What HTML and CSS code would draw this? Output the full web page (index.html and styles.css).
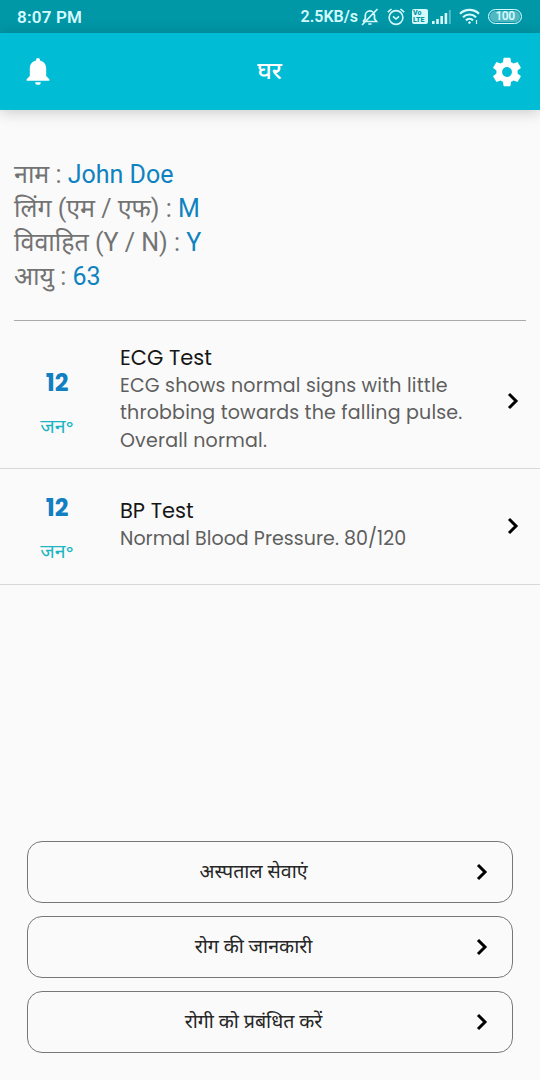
FILE: index.html
```html
<!DOCTYPE html>
<html lang="hi">
<head>
  <meta charset="UTF-8" />
  <meta name="viewport" content="width=device-width, initial-scale=1.0"/>
  <title>घर</title>
  <link rel="stylesheet" href="styles.css">
</head>
<body>
  <div class="status-bar">
    <span class="time">8:07 PM</span>
    <div class="status-icons">
      <span class="speed">2.5KB/s</span>
      <svg class="mute" width="18" height="18" viewBox="0 0 18 18" fill="none" stroke="currentColor" stroke-width="1.7">
        <path d="M2 13.500h13.500l-2-2.800V7.500a4.600 4.600 0 0 0-9.200 0v3.200L2 13.500M7.200 16h3.400M1 17 16.500 1"/>
      </svg>
      <svg class="alarm" width="18" height="18" viewBox="0 0 18 18" fill="none" stroke="currentColor" stroke-width="1.6">
        <circle cx="9" cy="9.500" r="6.900"/>
        <path d="M.8 4.200 4.500 1M17.200 4.200 13.500 1M6 8.300l3 2.700 3-2.700"/>
      </svg>
      <div class="volte"><span>Vo</span><span>LTE</span></div>
      <svg class="signal" width="20" height="16" viewBox="0 0 20 16" fill="currentColor">
        <path d="M0 12h2.600v3H0zM4.200 10h2.600v5H4.200zM8.400 7H11v8H8.400zM12.600 4h2.600v11h-2.600z"/>
        <path opacity=".4" d="M16.800 1h2v14h-2z"/>
      </svg>
      <svg class="wifi" width="21" height="17" viewBox="0 0 21 17" fill="none" stroke="currentColor" stroke-width="2.200">
        <path d="M1 5.800a13.600 13.600 0 0 1 19 0M4 9.200a9.200 9.200 0 0 1 13 0M7 12.400a5 5 0 0 1 7 0"/>
        <circle cx="10.500" cy="14.600" r=".9" fill="currentColor" stroke-width="1"/>
        <path stroke-width="1.200" d="M17.500 12v4"/>
      </svg>
      <div class="battery">100</div>
    </div>
  </div>

  <header class="app-bar">
    <svg class="bell" width="24" height="28" viewBox="0 0 24 28" fill="currentColor">
      <path d="M12 0a2 2 0 0 0-2 2v.5C6.300 3.400 3.800 6.400 3.800 10.300V18L.6 21.200V22.700h22.800V21.200L20.200 18v-7.700c0-3.900-2.500-6.900-6.200-7.800V2a2 2 0 0 0-2-2zM9.200 24.200a2.800 2.600 0 0 0 5.600 0z"/>
    </svg>
    <h1 class="title">घर</h1>
    <svg class="gear" width="34" height="34" viewBox="0 0 24 24" fill="currentColor">
      <path d="M19.430 12.980c.04-.32.07-.64.07-.98s-.03-.66-.07-.98l2.110-1.650c.19-.15.24-.42.12-.64l-2-3.460c-.12-.22-.39-.3-.61-.22l-2.490 1c-.52-.4-1.080-.73-1.690-.98l-.38-2.650C14.460 2.180 14.250 2 14 2h-4c-.25 0-.46.18-.49.42l-.38 2.650c-.61.25-1.170.59-1.690.98l-2.490-1c-.23-.09-.49 0-.61.22l-2 3.460c-.13.22-.07.49.12.64l2.110 1.650c-.04.32-.07.65-.07.98s.03.66.07.98l-2.110 1.650c-.19.15-.24.42-.12.64l2 3.460c.12.22.39.3.61.22l2.490-1c.52.4 1.080.73 1.690.98l.38 2.650c.03.24.24.42.49.42h4c.25 0 .46-.18.49-.42l.38-2.650c.61-.25 1.170-.59 1.690-.98l2.490 1c.23.09.49 0 .61-.22l2-3.460c.12-.22.07-.49-.12-.64l-2.110-1.650zM12 15.500a3.500 3.500 0 1 1 0-7 3.500 3.500 0 0 1 0 7z"/>
    </svg>
  </header>

  <main>
    <section class="profile">
      <p>नाम : <span class="value">John Doe</span></p>
      <p>लिंग (एम / एफ) : <span class="value">M</span></p>
      <p>विवाहित (Y / N) : <span class="value">Y</span></p>
      <p>आयु : <span class="value">63</span></p>
    </section>

    <ul class="tests">
      <li class="test ecg">
        <div class="date"><span class="day">12</span><span class="month">जन॰</span></div>
        <div class="info">
          <h2>ECG Test</h2>
          <p>ECG shows normal signs with little<br>throbbing towards the falling pulse.<br>Overall normal.</p>
        </div>
        <svg class="chevron" width="12" height="18" viewBox="0 0 12 18"><path d="M2 2l7 7-7 7"/></svg>
      </li>
      <li class="test bp">
        <div class="date"><span class="day">12</span><span class="month">जन॰</span></div>
        <div class="info">
          <h2>BP Test</h2>
          <p>Normal Blood Pressure. 80/120</p>
        </div>
        <svg class="chevron" width="12" height="18" viewBox="0 0 12 18"><path d="M2 2l7 7-7 7"/></svg>
      </li>
    </ul>
  </main>

  <nav class="actions">
    <button type="button">
      <span>अस्पताल सेवाएं</span>
      <svg class="chevron" width="12" height="18" viewBox="0 0 12 18"><path d="M2 2l7 7-7 7"/></svg>
    </button>
    <button type="button">
      <span>रोग की जानकारी</span>
      <svg class="chevron" width="12" height="18" viewBox="0 0 12 18"><path d="M2 2l7 7-7 7"/></svg>
    </button>
    <button type="button">
      <span>रोगी को प्रबंधित करें</span>
      <svg class="chevron" width="12" height="18" viewBox="0 0 12 18"><path d="M2 2l7 7-7 7"/></svg>
    </button>
  </nav>
</body>
</html>
```
FILE: styles.css
```css
* {
  box-sizing: border-box;
}

body {
  margin: 0;
  height: 1080px;
  display: flex;
  flex-direction: column;
  background-color: #fafafa;
  font-family: Roboto, "Noto Sans Devanagari", "Noto Sans", sans-serif;
}

h1, h2, p, ul {
  margin: 0;
  padding: 0;
  font-weight: normal;
}

svg {
  flex: none;
}

.status-bar {
  display: flex;
  align-items: center;
  justify-content: space-between;
  height: 33px;
  padding: 0 18px 0 17px;
  background-color: #0097a7;
  color: #d5fbff;
  font-weight: 600;
}

.time {
  font-size: 17px;
  letter-spacing: 0.2px;
}

.status-icons {
  display: flex;
  align-items: center;
}

.speed {
  margin-right: 3px;
  font-size: 16px;
}

.alarm {
  margin-left: 8px;
}

.volte {
  display: flex;
  flex-direction: column;
  width: 16px;
  height: 15px;
  margin: 0 4px 0 7px;
  padding: 1px;
  border-radius: 2px;
  background-color: #d5fbff;
  color: #0097a7;
  font-size: 7px;
  font-weight: 900;
  line-height: 6.5px;
}

.wifi {
  margin: 0 8px 0 7px;
}

.battery {
  width: 34px;
  height: 15px;
  border: 1.5px solid #d5fbff;
  border-radius: 8px;
  background-color: #4fb8c2;
  box-shadow: inset 0 0 0 1px #0097a7;
  font-size: 12px;
  letter-spacing: -0.5px;
  line-height: 13px;
  text-align: center;
}

.app-bar {
  display: flex;
  align-items: center;
  justify-content: space-between;
  height: 77px;
  padding: 0 16px 0 26px;
  background-color: #00bcd4;
  box-shadow: 0 2px 14px rgba(0, 0, 0, 0.2);
  color: #fff;
}

.title {
  margin-right: 1px;
  padding-top: 3px;
  font-size: 24px;
  font-weight: 500;
}

.profile {
  height: 211px;
  margin: 0 14px;
  padding-top: 48px;
  border-bottom: 1px solid #aaa;
  color: #737373;
  font-size: 25px;
  line-height: 34px;
}

.value {
  color: #0f82c0;
}

.tests {
  list-style: none;
}

.test {
  display: flex;
  align-items: center;
  padding-right: 21px;
  border-bottom: 1px solid #d8d8d8;
}

.ecg {
  height: 148px;
  padding-top: 12px;
}

.bp {
  height: 116px;
  padding-bottom: 1px;
}

.date {
  display: flex;
  flex-direction: column;
  align-items: center;
  width: 114px;
  padding-top: 8px;
}

.day {
  color: #117fc2;
  font-family: Poppins, Inter, sans-serif;
  font-size: 24px;
  font-weight: 700;
  line-height: 30px;
}

.month {
  margin-top: 14px;
  color: #1cb5c3;
  font-size: 19.5px;
  line-height: 30px;
}

.info {
  flex: 1;
  padding: 0 0 3px 6px;
  font-family: Poppins, Inter, sans-serif;
}

.info h2 {
  color: #161616;
  font-size: 21px;
  line-height: 28px;
}

.info p {
  color: #5e5e5e;
  font-size: 19px;
  letter-spacing: 0.04px;
  line-height: 27.5px;
  white-space: nowrap;
}

.ecg p {
  letter-spacing: 0.19px;
}

.chevron {
  fill: none;
  stroke: #000;
  stroke-width: 3;
}

.actions {
  display: flex;
  flex-direction: column;
  gap: 13px;
  margin-top: auto;
  padding: 0 27px 27px;
}

.actions button {
  display: flex;
  align-items: center;
  height: 62px;
  padding: 0 24px 0 0;
  border: 1px solid #777;
  border-radius: 15px;
  background: none;
  color: #262626;
  font-family: inherit;
  font-size: 19.6px;
}

.actions span {
  flex: 1;
  padding: 2px 0 0 3px;
}
```
